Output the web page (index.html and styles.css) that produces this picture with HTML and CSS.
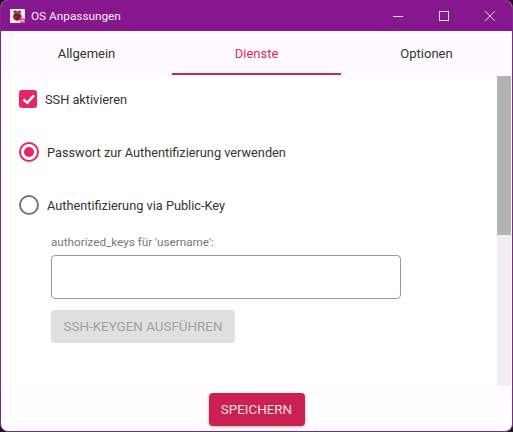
FILE: index.html
```html
<!DOCTYPE html>
<html lang="de">
<head>
<meta charset="utf-8">
<title>OS Anpassungen</title>
<link rel="stylesheet" href="styles.css">
</head>
<body>
<div class="window">
  <header class="titlebar">
    <svg class="app-icon" width="15" height="14" viewBox="0 0 16 15">
      <rect x="0" y="0" width="16" height="15" rx="1" fill="#f4eef2"/>
      <ellipse cx="5.500" cy="3" rx="2.200" ry="1.400" fill="#3f6e38"/>
      <ellipse cx="10" cy="3" rx="2.200" ry="1.400" fill="#3f6e38"/>
      <circle cx="7.800" cy="8" r="4.600" fill="#a81f45"/>
      <circle cx="6.400" cy="6.800" r="1.100" fill="#3a1420"/>
      <circle cx="9.400" cy="7.400" r="1.100" fill="#3a1420"/>
      <circle cx="7.800" cy="10.200" r="1.100" fill="#3a1420"/>
      <rect x="11" y="10" width="5" height="5" rx="1" fill="#d8577a"/>
      <rect x="12.500" y="11.500" width="2" height="2" fill="#f7dfe8"/>
    </svg>
    <span class="title">OS Anpassungen</span>
    <div class="controls">
      <svg class="ctl" width="46" height="30" viewBox="0 0 46 30"><path d="M18 15.500h10" stroke="#f6e8f7" fill="none"/></svg>
      <svg class="ctl" width="46" height="30" viewBox="0 0 46 30"><rect x="18.500" y="10.500" width="9" height="9" stroke="#f6e8f7" fill="none"/></svg>
      <svg class="ctl" width="46" height="30" viewBox="0 0 46 30"><path d="M18 10l10 10M28 10l-10 10" stroke="#f6e8f7" fill="none"/></svg>
    </div>
  </header>
  <nav class="tabs">
    <div class="tab">Allgemein</div>
    <div class="tab active">Dienste</div>
    <div class="tab">Optionen</div>
  </nav>
  <div class="body">
    <main class="content">
      <label class="row check-row">
        <span class="checkbox">
          <svg width="18" height="18" viewBox="0 0 18 18"><path d="M4.500 9.300l3.700 3.500 6.800-7.400" stroke="#fff" stroke-width="2.400" fill="none"/></svg>
        </span>
        <span class="check-label">SSH aktivieren</span>
      </label>
      <label class="row radio-row first-radio">
        <span class="radio on"><span class="dot"></span></span>
        <span>Passwort zur Authentifizierung verwenden</span>
      </label>
      <label class="row radio-row second-radio">
        <span class="radio"></span>
        <span>Authentifizierung via Public-Key</span>
      </label>
      <div class="keys">
        <div class="keys-label">authorized_keys für 'username':</div>
        <div class="field"></div>
        <div class="keygen">SSH-KEYGEN AUSFÜHREN</div>
      </div>
    </main>
    <div class="scrollbar"><div class="thumb"></div></div>
  </div>
  <footer class="footer">
    <button class="save">SPEICHERN</button>
  </footer>
</div>
</body>
</html>
```
FILE: styles.css
```css
* { box-sizing: border-box; }
html, body { margin: 0; padding: 0; background: #1c1420; }
body { width: 513px; height: 432px; overflow: hidden; font-family: Roboto, "Liberation Sans", sans-serif; }
.window {
  width: 513px; height: 432px; display: flex; flex-direction: column;
  background: #fffdff; border: 1px solid #7a2a86; border-top: 0;
  border-radius: 8px; overflow: hidden;
}
.titlebar {
  height: 31px; flex: none; display: flex; align-items: center;
  background: #86178f; color: #f8ecf9; padding-left: 10px;
  margin: 0 -1px;
}
.app-icon { flex: none; margin-top: 1px; }
.title { font-size: 11.800px; margin-left: 6px; }
.controls { margin-left: auto; display: flex; padding-right: 0; }
.ctl { display: block; }
.tabs { height: 45px; flex: none; display: grid; grid-template-columns: 171px 169px 171px; background: #fffafe; }
.tab {
  height: 44px; display: flex; align-items: center; justify-content: center;
  font-size: 13px; color: #333; padding-top: 2px; border-bottom: 2px solid transparent;
}
.tab.active { color: #d92a6a; border-bottom-color: #c1265f; }
.body { height: 310px; flex: none; display: flex; background: #fff; }
.content { flex: 1; padding: 13px 0 0 18px; }
.row { display: flex; align-items: center; font-size: 12.750px; color: #333; }
.check-row { height: 20px; gap: 8px; }
.checkbox {
  width: 18px; height: 18px; border-radius: 3px; background: #e52565; display: block;
}
.checkbox svg { display: block; }
.radio-row { height: 20px; gap: 8px; }
.first-radio { margin-top: 33px; }
.second-radio { margin-top: 33px; }
.radio {
  width: 20px; height: 20px; border-radius: 50%; border: 2px solid #757575;
  display: flex; align-items: center; justify-content: center; flex: none;
}
.radio.on { border-color: #e52565; }
.dot { width: 10px; height: 10px; border-radius: 50%; background: #e52565; }
.keys { margin-left: 32px; padding-top: 20px; }
.keys-label { font-size: 11.700px; color: #777; line-height: 14px; }
.field { width: 350px; height: 44px; margin-top: 6px; border: 1px solid #9a9a9a; border-radius: 4px; background: #fff; }
.keygen {
  width: 184px; height: 33px; margin-top: 11px; border-radius: 4px; background: #e0e0e0;
  color: #a0a0a0; font-size: 13.400px; display: flex; align-items: center; justify-content: center;
}
.scrollbar { width: 14px; flex: none; background: #f0eef1; margin-right: 1px; }
.thumb { height: 159px; background: #b3b3b3; }
.footer { flex: 1; display: flex; justify-content: center; align-items: flex-start; padding-top: 7px; }
.save {
  width: 96px; height: 33px; border: 0; border-radius: 4px; background: #cb2052; color: #fbdfe8;
  font-family: inherit; font-size: 13.400px; padding: 0;
  box-shadow: 0 1px 3px rgba(0,0,0,.3);
}
```
